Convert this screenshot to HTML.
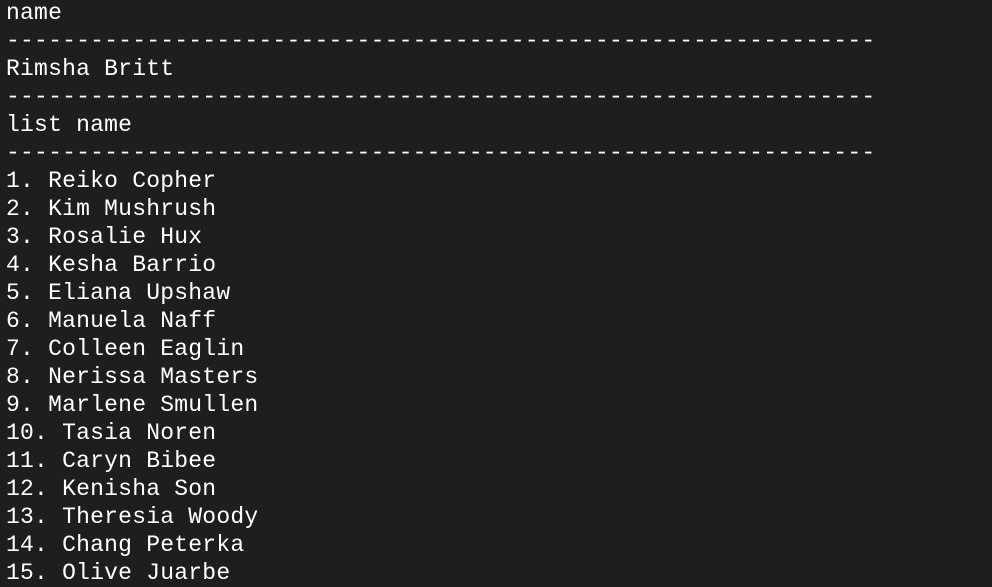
<!DOCTYPE html>
<html><head><meta charset="utf-8"><style>
html,body{margin:0;padding:0;background:#1e1e1e;width:992px;height:586px;overflow:hidden}
pre{margin:0;position:absolute;left:6px;top:-1px;font-family:"Liberation Mono",monospace;font-size:23px;letter-spacing:0.22px;line-height:28px;color:#ffffff;white-space:pre}
</style></head><body><pre>name
--------------------------------------------------------------
Rimsha Britt
--------------------------------------------------------------
list name
--------------------------------------------------------------
1. Reiko Copher
2. Kim Mushrush
3. Rosalie Hux
4. Kesha Barrio
5. Eliana Upshaw
6. Manuela Naff
7. Colleen Eaglin
8. Nerissa Masters
9. Marlene Smullen
10. Tasia Noren
11. Caryn Bibee
12. Kenisha Son
13. Theresia Woody
14. Chang Peterka
15. Olive Juarbe</pre></body></html>
